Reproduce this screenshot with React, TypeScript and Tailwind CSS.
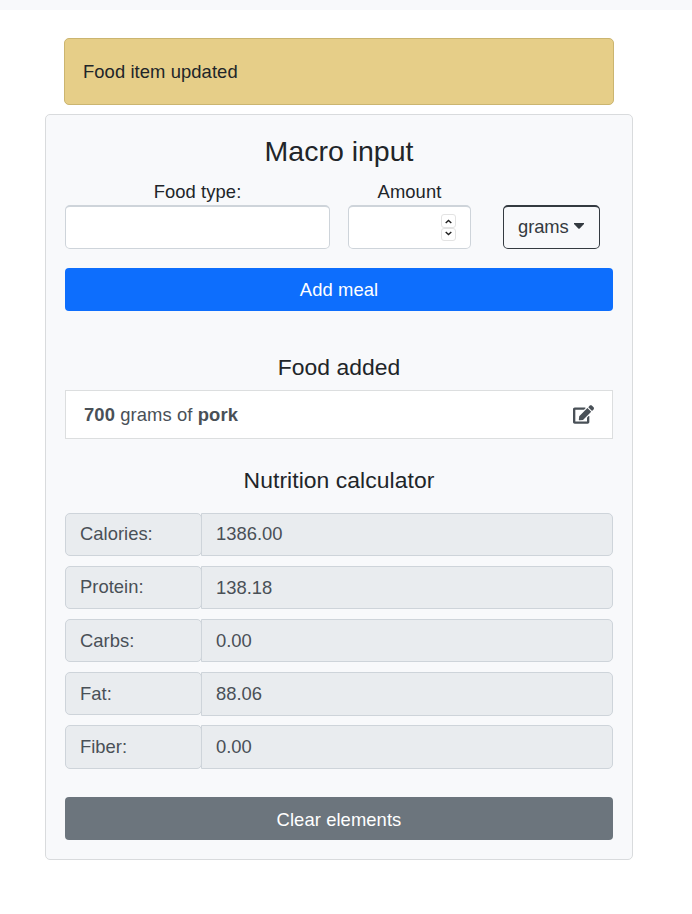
import { FaEdit } from "react-icons/fa";

const nutrients = [
  { label: "Calories:", value: "1386.00", labelSize: "h-[43px]", size: "h-[43px] mb-2.5", shift: "pb-0.5", valueShift: "pb-0.5" },
  { label: "Protein:", value: "138.18", labelSize: "h-[43px]", size: "h-[43px] mb-2.5", shift: "pb-0.5", valueShift: "" },
  { label: "Carbs:", value: "0.00", labelSize: "h-[43px]", size: "h-[43px] mb-2.5", shift: "", valueShift: "" },
  { label: "Fat:", value: "88.06", labelSize: "h-[43px]", size: "h-[44px] mb-[9px]", shift: "pb-px", valueShift: "pb-0.5" },
  { label: "Fiber:", value: "0.00", labelSize: "h-[44px]", size: "h-[44px]", shift: "pb-0.5", valueShift: "pb-0.5" },
];

function Chevron({ down = false }: { down?: boolean }) {
  return (
    <svg width="7" height="5" viewBox="0 0 7 5" fill="none" stroke="#202020" strokeWidth="1.4">
      <path d={down ? "M.7 1 3.5 3.6 6.3 1" : "M.7 4 3.5 1.4 6.3 4"} />
    </svg>
  );
}

export default function App() {
  return (
    <div className="h-[914px] bg-white font-['Liberation_Sans',Arial,sans-serif] text-[18.4px] leading-[27px] tracking-[0.08px] text-[#212529]">
      <div className="h-2.5 bg-[#f8f9fb]" />
      <div className="mt-7 ml-16 flex h-[67px] w-[550px] items-center rounded-[5px] border border-[#cbb570] bg-[#e6ce88] pl-[18px]">
        <span>Food item updated</span>
      </div>
      <main className="mt-[9px] ml-[45px] h-[746px] w-[588px] rounded-[5px] border border-[#d9dbdd] bg-[#f8f9fb] px-[19px] pt-5">
        <h1 className="h-[33px] text-center text-[28.5px] leading-[33px] tracking-normal">Macro input</h1>
        <div className="mt-[9px] flex items-end">
          <label className="flex w-[265px] flex-col text-center">
            <span className="h-7 leading-[29px]">Food type:</span>
            <span className="h-11 rounded-[5px] border border-t-2 border-[#ced4da] bg-white" />
          </label>
          <label className="ml-[18px] flex w-[123px] flex-col text-center">
            <span className="h-7 leading-[29px]">Amount</span>
            <span className="flex h-11 flex-col items-end rounded-[5px] border border-t-2 border-[#ced4da] bg-white pt-[7px] pr-3.5">
              <span className="flex h-[14px] w-[15px] items-center justify-center rounded-[3px] border border-[#e3e3e3]">
                <Chevron />
              </span>
              <span className="flex h-[13px] w-[15px] items-center justify-center rounded-[3px] border border-[#e3e3e3] pb-0.5">
                <Chevron down />
              </span>
            </span>
          </label>
          <button className="ml-8 flex h-11 w-[97px] items-center rounded-[5px] border border-t-2 border-[#343a40] pl-3.5 text-[#343a40]">
            <span className="pb-0.5 tracking-[-0.08px]">grams</span>
            <svg className="mb-[3px] ml-[5px]" width="10" height="6" viewBox="0 0 10 6" fill="#343a40">
              <path d="M0 0H10V1L5.7 5.5Q5 6 4.3 5.5L0 1Z" />
            </svg>
          </button>
        </div>
        <button className="mt-[19px] h-[43px] w-full rounded-[4px] bg-[#0d6efd] text-white">Add meal</button>
        <h2 className="mt-[42px] h-7 text-center text-[22.9px] leading-7 tracking-[0.03px]">Food added</h2>
        <div className="mt-[9px] flex h-[49px] items-center justify-between border border-[#dcdedf] bg-white pr-[18px] pl-[18px] text-[#495057]">
          <span className="tracking-[0.1px]">
            <b>700</b> grams of <b>pork</b>
          </span>
          <FaEdit size={21} className="mb-px" />
        </div>
        <h2 className="mt-[27px] h-7 text-center text-[22.9px] leading-7 tracking-[0.06px]">Nutrition calculator</h2>
        <div className="mt-[19px] text-[#495057]">
          {nutrients.map((row) => (
            <div key={row.label} className={`flex items-start ${row.size}`}>
              <div className={`flex w-[137px] shrink-0 items-center rounded-[5px] border border-[#ced4da] bg-[#e9ecef] pl-3.5 tracking-[0.02px] ${row.labelSize} ${row.shift}`}>
                {row.label}
              </div>
              <div className={`-ml-px flex h-full flex-1 items-center rounded-r-[5px] border border-[#ced4da] bg-[#e9ecef] pl-3.5 tracking-normal ${row.valueShift}`}>
                {row.value}
              </div>
            </div>
          ))}
        </div>
        <button className="mt-7 h-[43px] w-full rounded-[4px] bg-[#6c757d] pt-0.5 text-white">Clear elements</button>
      </main>
    </div>
  );
}
